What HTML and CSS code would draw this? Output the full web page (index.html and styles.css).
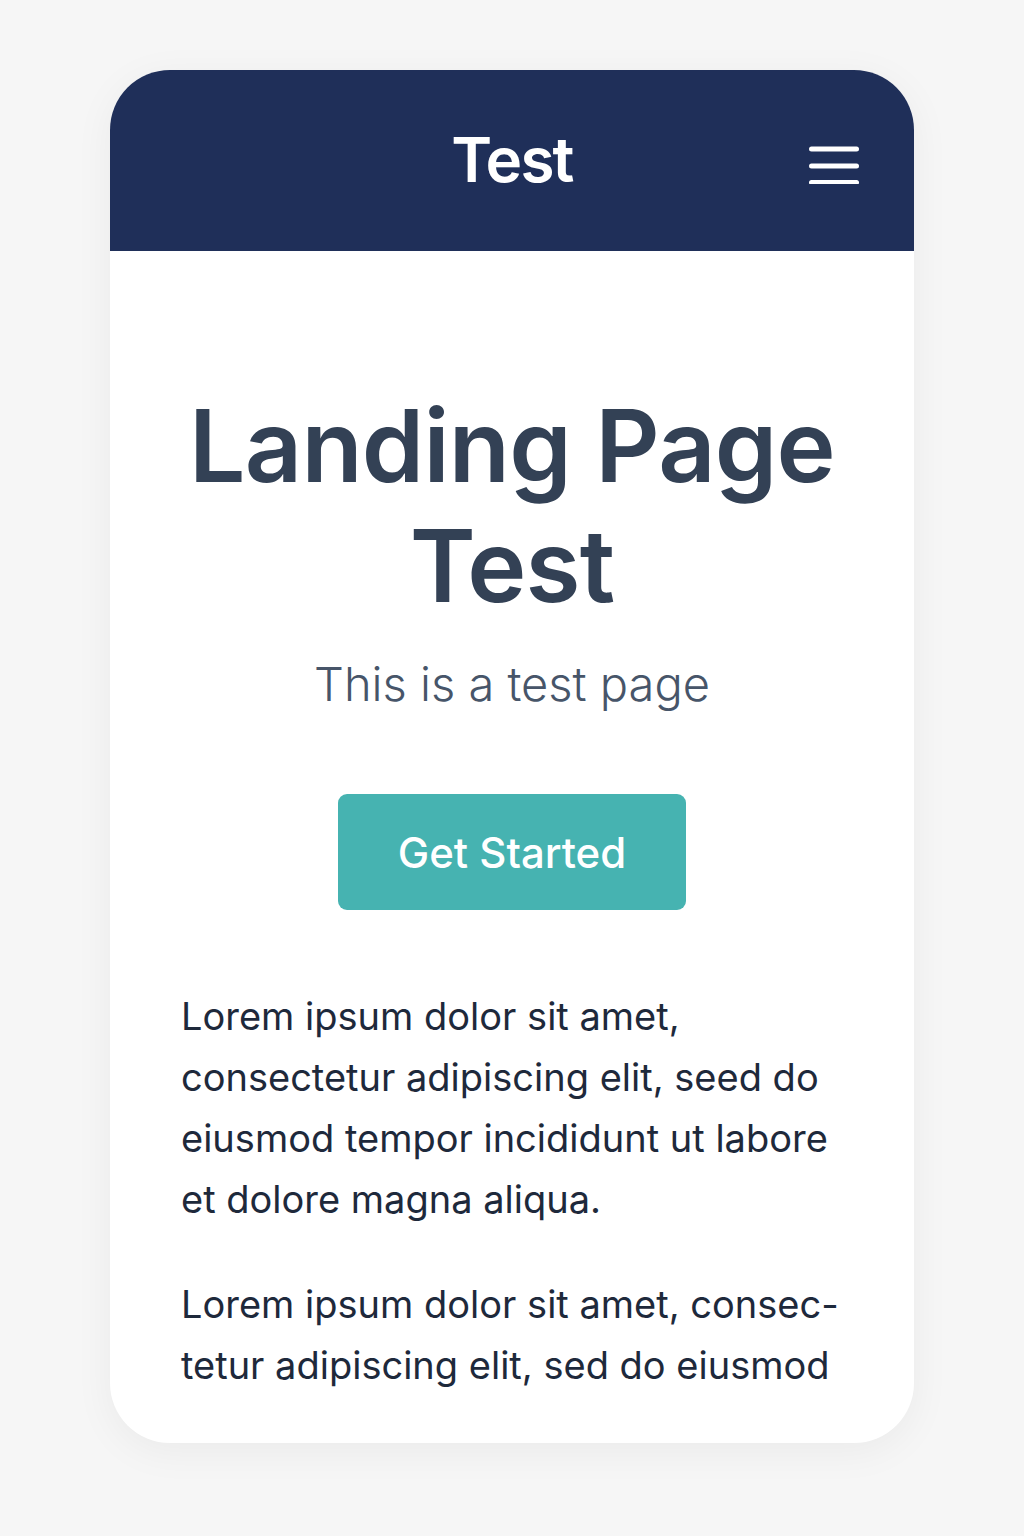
FILE: index.html
```html
<!DOCTYPE html>
<html lang="en">
<head>
<meta charset="utf-8">
<title>Test</title>
<link rel="stylesheet" href="styles.css">
</head>
<body>
<div class="card">
  <header class="topbar">
    <div class="brand">Test</div>
    <button class="menu" aria-label="Menu">
      <svg width="50" height="40" viewBox="0 0 50 40">
        <rect x="0" y="2.5" width="50" height="5" rx="2.5" fill="#fff"/>
        <rect x="0" y="19.5" width="50" height="5" rx="2.5" fill="#fff"/>
        <rect x="0" y="36" width="50" height="5" rx="2.5" fill="#fff"/>
      </svg>
    </button>
  </header>
  <main class="content">
    <h1 class="title">Landing Page<br>Test</h1>
    <p class="subtitle">This is a test page</p>
    <div class="cta-row"><a class="cta" href="#">Get Started</a></div>
    <p class="body-text">Lorem ipsum dolor sit amet, consectetur adipiscing elit, seed do eiusmod tempor incididunt ut labore et dolore magna aliqua.</p>
    <p class="body-text">Lorem ipsum dolor sit amet, consec-<br>tetur adipiscing elit, sed do eiusmod</p>
  </main>
</div>
</body>
</html>
```
FILE: styles.css
```css
* { box-sizing: border-box; }
html, body { margin: 0; padding: 0; }
body {
  background: #f6f6f6;
  font-family: Inter, "Noto Sans", "Liberation Sans", sans-serif;
  padding-top: 70px;
  min-height: 1536px;
}
.card {
  width: 804px;
  margin: 0 auto;
  background: #ffffff;
  border-radius: 60px;
  overflow: hidden;
  box-shadow: 0 8px 40px rgba(0, 0, 0, 0.05);
}
.topbar {
  position: relative;
  height: 181px;
  background: #1f2f59;
  display: flex;
  align-items: center;
  justify-content: center;
}
.brand {
  color: #ffffff;
  font-size: 62px;
  font-weight: 600;
  letter-spacing: -0.03em;
  line-height: 1;
  margin-top: -2px;
}
.menu {
  position: absolute;
  right: 55px;
  top: 73px;
  background: none;
  border: 0;
  padding: 0;
  width: 50px;
  height: 42px;
  display: block;
}
.menu svg { display: block; }
.content {
  padding: 135px 71px 47px;
}
.title {
  margin: 0;
  text-align: center;
  font-size: 100px;
  line-height: 120px;
  font-weight: 600;
  letter-spacing: -0.008em;
  color: #334155;
}
.subtitle {
  margin: 30px 0 0;
  text-align: center;
  font-size: 47px;
  line-height: 55px;
  font-weight: 300;
  color: #475569;
}
.cta-row {
  display: flex;
  justify-content: center;
  margin-top: 83px;
}
.cta {
  width: 348px;
  height: 116px;
  display: flex;
  align-items: center;
  justify-content: center;
  background: #46b3b1;
  border-radius: 9px;
  color: #ffffff;
  text-decoration: none;
  font-size: 42px;
  font-weight: 500;
}
.body-text {
  margin: 76px 0 0;
  font-size: 38px;
  line-height: 61px;
  color: #1e293b;
}
.body-text + .body-text {
  margin-top: 44px;
}
```
